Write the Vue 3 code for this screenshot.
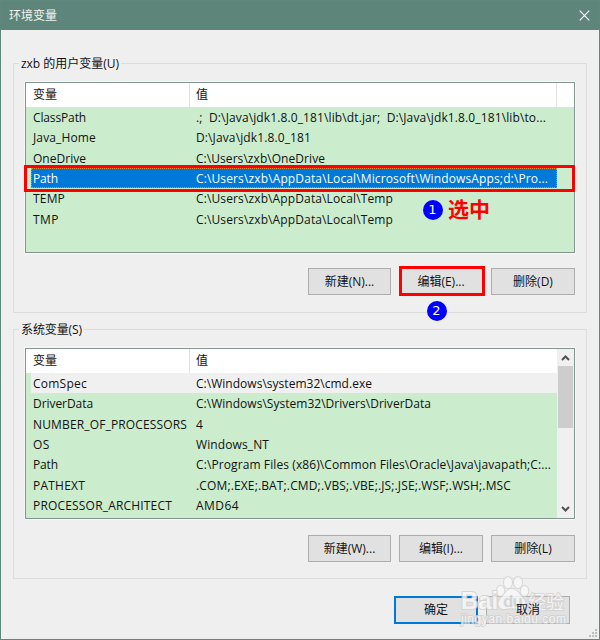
<script setup>
const userVars = [
  { name: 'ClassPath', nw: 53, value: '.;\u00a0 D:\\Java\\jdk1.8.0_181\\lib\\dt.jar;\u00a0 D:\\Java\\jdk1.8.0_181\\lib\\to...', vw: 350 },
  { name: 'Java_Home', nw: 63, value: 'D:\\Java\\jdk1.8.0_181', vw: 115 },
  { name: 'OneDrive', nw: 53, value: 'C:\\Users\\zxb\\OneDrive', vw: 129 },
  { name: 'Path', nw: 25, value: 'C:\\Users\\zxb\\AppData\\Local\\Microsoft\\WindowsApps;d:\\Pro...', vw: 352, state: 'selected' },
  { name: 'TEMP', nw: 32, value: 'C:\\Users\\zxb\\AppData\\Local\\Temp', vw: 197 },
  { name: 'TMP', nw: 26, value: 'C:\\Users\\zxb\\AppData\\Local\\Temp', vw: 197 },
]
const systemVars = [
  { name: 'ComSpec', nw: 54, value: 'C:\\Windows\\system32\\cmd.exe', vw: 176, state: 'inactive' },
  { name: 'DriverData', nw: 60, value: 'C:\\Windows\\System32\\Drivers\\DriverData', vw: 235 },
  { name: 'NUMBER_OF_PROCESSORS', nw: 154, value: '4', vw: 7 },
  { name: 'OS', nw: 17, value: 'Windows_NT', vw: 73 },
  { name: 'Path', nw: 25, value: 'C:\\Program Files (x86)\\Common Files\\Oracle\\Java\\javapath;C:...', vw: 355 },
  { name: 'PATHEXT', nw: 52, value: '.COM;.EXE;.BAT;.CMD;.VBS;.VBE;.JS;.JSE;.WSF;.WSH;.MSC', vw: 315 },
  { name: 'PROCESSOR_ARCHITECT', nw: 139, value: 'AMD64', vw: 43 },
]
const groups = [
  { id: 'user', label: 'zxb 的用户变量(U)', lw: 102, rows: userVars, buttons: ['新建(N)...', '编辑(E)...', '删除(D)'] },
  { id: 'system', label: '系统变量(S)', lw: 65, rows: systemVars, buttons: ['新建(W)...', '编辑(I)...', '删除(L)'], scroll: true },
]

const vFit = {
  mounted(el, { value }) {
    const n = el.textContent.length
    el.style.letterSpacing = `${(value - el.getBoundingClientRect().width) / n}px`
  },
}
</script>

<template>
  <div class="window">
    <header class="titlebar">
      <span>环境变量</span>
      <svg class="close" width="11" height="11" viewBox="0 0 11 11"><path d="M.7.7l9.6 9.6M10.3.7L.7 10.3" /></svg>
    </header>

    <main class="body">
      <section v-for="g in groups" :key="g.id" class="group">
        <div class="legend"><span v-fit="g.lw">{{ g.label }}</span></div>
        <div class="list">
          <div class="table">
            <div class="head">
              <span class="cell-name">变量</span>
              <span class="cell-value">值</span>
              <span v-if="!g.scroll" class="head-rest"></span>
            </div>
            <div v-for="(r, i) in g.rows" :key="i" class="row" :class="r.state">
              <span class="cell-name"><span v-fit="r.nw">{{ r.name }}</span></span>
              <span class="cell-value"><span v-fit="r.vw">{{ r.value }}</span></span>
            </div>
          </div>
          <div v-if="g.scroll" class="scrollbar">
            <svg width="9" height="6" viewBox="0 0 9 6"><path d="M1 5l3.500-3.500L8 5" /></svg>
            <div class="thumb"></div>
            <svg class="down" width="9" height="6" viewBox="0 0 9 6"><path d="M1 1l3.500 3.500L8 1" /></svg>
          </div>
        </div>
        <div class="buttons" :class="g.id">
          <button v-for="b in g.buttons" :key="b" class="btn">{{ b }}</button>
        </div>
      </section>

      <footer class="actions">
        <button class="btn primary">确定</button>
        <button class="btn"><span class="above">取消</span></button>
      </footer>
    </main>

    <div class="mark mark-row"></div>
    <div class="mark mark-button"></div>
    <div class="badge badge-one">1</div>
    <div class="hint">选中</div>
    <div class="badge badge-two">2</div>

    <svg class="watermark" width="120" height="60" viewBox="0 0 120 60">
      <g class="wm-shape">
        <ellipse cx="40.500" cy="20" rx="3.800" ry="5" />
        <ellipse cx="48" cy="11.500" rx="4" ry="5.500" />
        <ellipse cx="58" cy="11.500" rx="4" ry="5.500" />
        <ellipse cx="64.500" cy="20" rx="3.800" ry="5" />
        <path d="M52 18c5 0 7 5 11 9 5 6 2 12-4 11-5-1-9-1-14 0-6 1-9-5-4-11 4-4 6-9 11-9z" />
      </g>
      <text class="wm-big" x="1" y="38" textLength="37" lengthAdjust="spacingAndGlyphs">Bai</text>
      <text class="wm-du" x="43" y="36" textLength="20">du</text>
      <text class="wm-cn" x="68" y="38" textLength="36">经验</text>
      <text class="wm-url" x="1" y="52" textLength="105">jingyan.baidu.com</text>
    </svg>

    <svg class="grip" width="8" height="8" viewBox="0 0 8 8">
      <path d="M6 0h2v2H6zM3 3h2v2H3zM6 3h2v2H6zM0 6h2v2H0zM3 6h2v2H3zM6 6h2v2H6z" />
    </svg>
  </div>
</template>

<style>
body {
  margin: 0;
}
</style>

<style scoped>
.window {
  position: relative;
  box-sizing: border-box;
  width: 600px;
  height: 640px;
  overflow: hidden;
  border: 1px solid #5f877b;
  background: #efefef;
  color: #111;
  font: 12px/20px "Open Sans", "Noto Sans CJK SC", sans-serif;
}
.titlebar {
  display: flex;
  align-items: center;
  justify-content: space-between;
  height: 29px;
  padding: 0 9px 0 8px;
  background: #5d8579;
  color: #f2f5f4;
}
.close path {
  fill: none;
  stroke: #fff;
  stroke-width: 1.2;
}
.body {
  display: flex;
  flex-direction: column;
  gap: 16px;
  padding: 33px 12px 0;
}
.group {
  box-sizing: border-box;
  height: 250px;
  border: 1px solid #dcdcdc;
  padding: 0 11px;
}
.legend {
  display: flex;
  height: 18px;
  margin-left: -6px;
}
.legend span {
  height: 20px;
  margin-top: -10px;
  padding: 0 2px;
  background: #efefef;
  white-space: nowrap;
}
.list {
  display: flex;
  box-sizing: border-box;
  height: 171px;
  border: 1px solid #82958e;
  background: #cbedce;
  box-shadow: 0 0 0 1px #f8f8f8;
  overflow: hidden;
}
.table {
  flex: 1;
}
.head {
  display: flex;
  height: 24px;
  line-height: 24px;
  background: #fff;
}
.cell-name {
  box-sizing: border-box;
  width: 164px;
  padding-left: 7px;
  white-space: nowrap;
}
.cell-value {
  flex: 1;
  padding-left: 6px;
  white-space: nowrap;
}
.head .cell-name {
  border-right: 1px solid #e2e2e2;
}
.head-rest {
  box-sizing: border-box;
  width: 18px;
  border-left: 1px solid #e2e2e2;
}
.row {
  display: flex;
  height: 20.35px;
  line-height: 21.2px;
}
.row.selected {
  box-sizing: border-box;
  margin: 0 17px 0 5px;
  background: #0078d7;
  color: #fff;
  outline: 1px dotted #d98a3b;
  outline-offset: -1px;
}
.row.inactive {
  margin-left: 5px;
  background: #f0f0f0;
}
.row.selected .cell-name,
.row.inactive .cell-name {
  width: 159px;
  padding-left: 2px;
}
.scrollbar {
  display: flex;
  flex-direction: column;
  align-items: center;
  box-sizing: border-box;
  width: 17px;
  padding: 6px 1px 6px 0;
  background: #f0f0f0;
}
.scrollbar path {
  fill: none;
  stroke: #505050;
  stroke-width: 2;
}
.thumb {
  width: 15px;
  height: 62px;
  margin-top: 5px;
  background: #cdcdcd;
}
.down {
  margin-top: auto;
}
.buttons {
  display: flex;
  justify-content: flex-end;
  gap: 8px;
  margin-top: 15px;
}
.buttons.system {
  margin-top: 16px;
}
.btn {
  box-sizing: border-box;
  width: 84px;
  height: 27px;
  padding: 0;
  border: 1px solid #adadad;
  border-radius: 0;
  background: #e1e1e1;
  color: #111;
  font: inherit;
}
.buttons .btn:first-child {
  width: 83px;
}
.btn.primary {
  border: 2px solid #0078d7;
}
.above {
  position: relative;
  z-index: 2;
}
.actions {
  display: flex;
  justify-content: flex-end;
  gap: 8px;
  margin-top: 1px;
  padding-right: 17px;
}
.actions .btn {
  height: 28px;
}
.mark {
  position: absolute;
  box-sizing: border-box;
  border: 3px solid #f00;
}
.mark-row {
  left: 23px;
  top: 164px;
  width: 551px;
  height: 27px;
}
.mark-button {
  left: 398px;
  top: 265px;
  width: 86px;
  height: 30px;
}
.badge {
  position: absolute;
  width: 20px;
  height: 20px;
  border-radius: 50%;
  background: #00f;
  color: #fff;
  font: 13px/20px "DejaVu Sans", sans-serif;
  text-align: center;
}
.badge-one {
  left: 421.5px;
  top: 198.5px;
}
.badge-two {
  left: 425.5px;
  top: 299.5px;
}
.hint {
  position: absolute;
  left: 447px;
  top: 192px;
  color: #f00;
  font: bold 21px/30px "Noto Sans CJK SC", sans-serif;
}
.watermark {
  position: absolute;
  z-index: 1;
  left: 459px;
  top: 570px;
  overflow: visible;
  opacity: 0.8;
}
.watermark text,
.wm-shape {
  fill: #f8f8f8;
  stroke: #d0d0d0;
  stroke-width: 2px;
  paint-order: stroke;
}
.wm-big {
  font: bold 23px "Liberation Sans", sans-serif;
}
.watermark .wm-du {
  fill: #d2d2d2;
  stroke: none;
  font: bold 17px "Liberation Sans", sans-serif;
}
.wm-cn {
  font: 18px "Noto Sans CJK SC", sans-serif;
}
.wm-url {
  font: 12px "Liberation Sans", sans-serif;
}
.grip {
  position: absolute;
  right: 2px;
  bottom: 2px;
}
.grip path {
  fill: #bdbdbd;
}
</style>
